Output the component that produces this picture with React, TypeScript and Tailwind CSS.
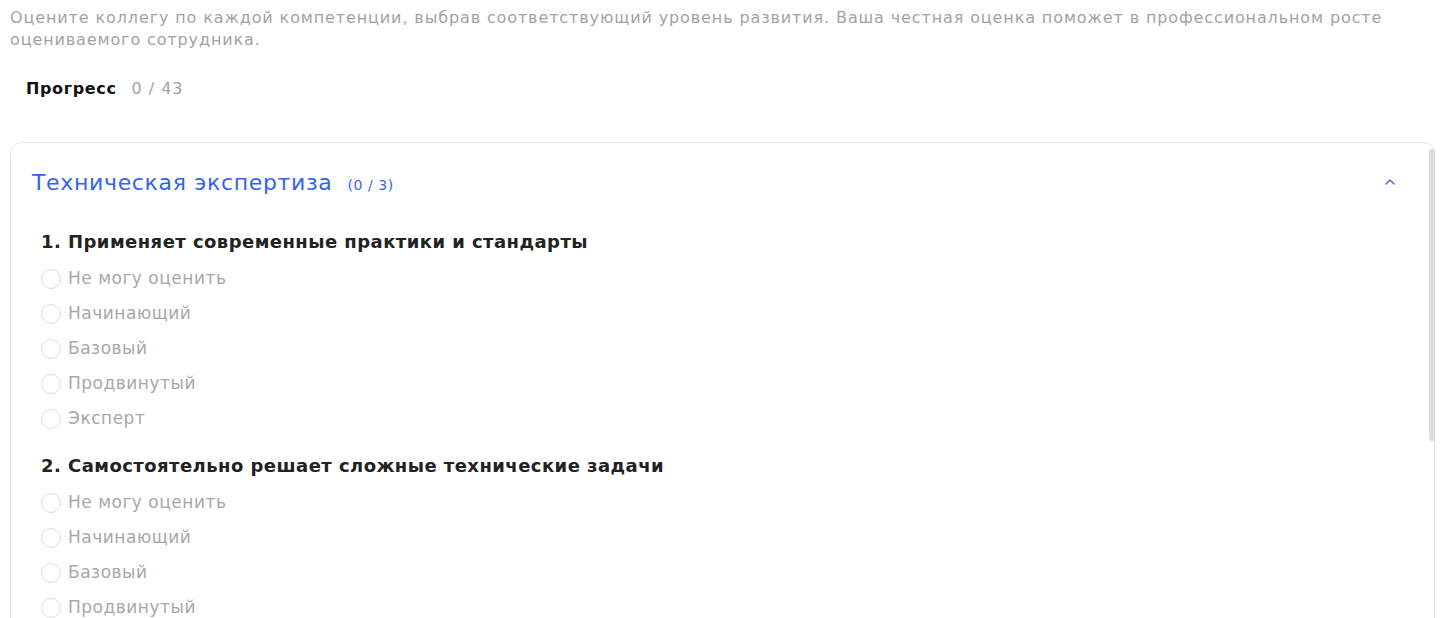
import { ChevronUp } from 'lucide-react';

const levels = ['Не могу оценить', 'Начинающий', 'Базовый', 'Продвинутый', 'Эксперт'];

const questions = [
    'Применяет современные практики и стандарты',
    'Самостоятельно решает сложные технические задачи',
    'Делится знаниями с коллегами',
];

const Question = ({ index, text }: { index: number; text: string }) => (
    <div className="mb-[17px]">
        <p className="text-[18px] leading-[26px] font-semibold tracking-[0.025em] text-[#222222] mb-[6px]">
            {index}. {text}
        </p>
        <div className="flex flex-col">
            {levels.map((level) => (
                <label key={level} className="flex items-center gap-[7px] h-[35px] cursor-pointer">
                    <span className="w-[20px] h-[20px] rounded-full border border-[#dddddd] bg-white" />
                    <span className="text-[17px] tracking-[0.03em] text-[#a8a8a8]">{level}</span>
                </label>
            ))}
        </div>
    </div>
);

const App = () => {
    return (
        <div
            className="h-screen w-full overflow-hidden bg-white px-[10px] pt-[7px]"
            style={{ fontFamily: '"DejaVu Sans", "Noto Sans", sans-serif' }}
        >
            <p className="text-[16px] leading-[22px] tracking-[0.055em] text-[#a3a3a3]">
                Оцените коллегу по каждой компетенции, выбрав соответствующий уровень развития. Ваша
                честная оценка поможет в профессиональном росте оцениваемого сотрудника.
            </p>
            <div className="flex items-center gap-[15px] pl-[16px] mt-[26px] h-[24px]">
                <span className="text-[16px] font-semibold tracking-[0.04em] text-[#111111]">Прогресс</span>
                <span className="text-[16px] tracking-[0.06em] text-[#a3a3a3]">0 / 43</span>
            </div>
            <div className="relative mt-[41px] mr-[6px] rounded-[12px] border border-[#e3e3e3] bg-white h-[600px]">
                <div className="flex items-center justify-between pl-[21px] pr-[36px] pt-[17px] h-[61px]">
                    <div className="flex items-baseline gap-[15px]">
                        <h2 className="text-[22px] font-medium tracking-[0.03em] text-[#3364ec]">
                            Техническая экспертиза
                        </h2>
                        <span className="text-[14px] tracking-[0.04em] text-[#3364ec]">(0 / 3)</span>
                    </div>
                    <ChevronUp className="w-[16px] h-[16px] text-[#3364ec]" strokeWidth={2} />
                </div>
                <div className="pl-[30px] pt-[25px]">
                    {questions.map((q, i) => (
                        <Question key={q} index={i + 1} text={q} />
                    ))}
                </div>
                <div className="absolute right-[-1px] top-[6px] w-[6px] h-[292px] rounded-full bg-[#dcdcdc]" />
            </div>
        </div>
    );
};

export default App;
